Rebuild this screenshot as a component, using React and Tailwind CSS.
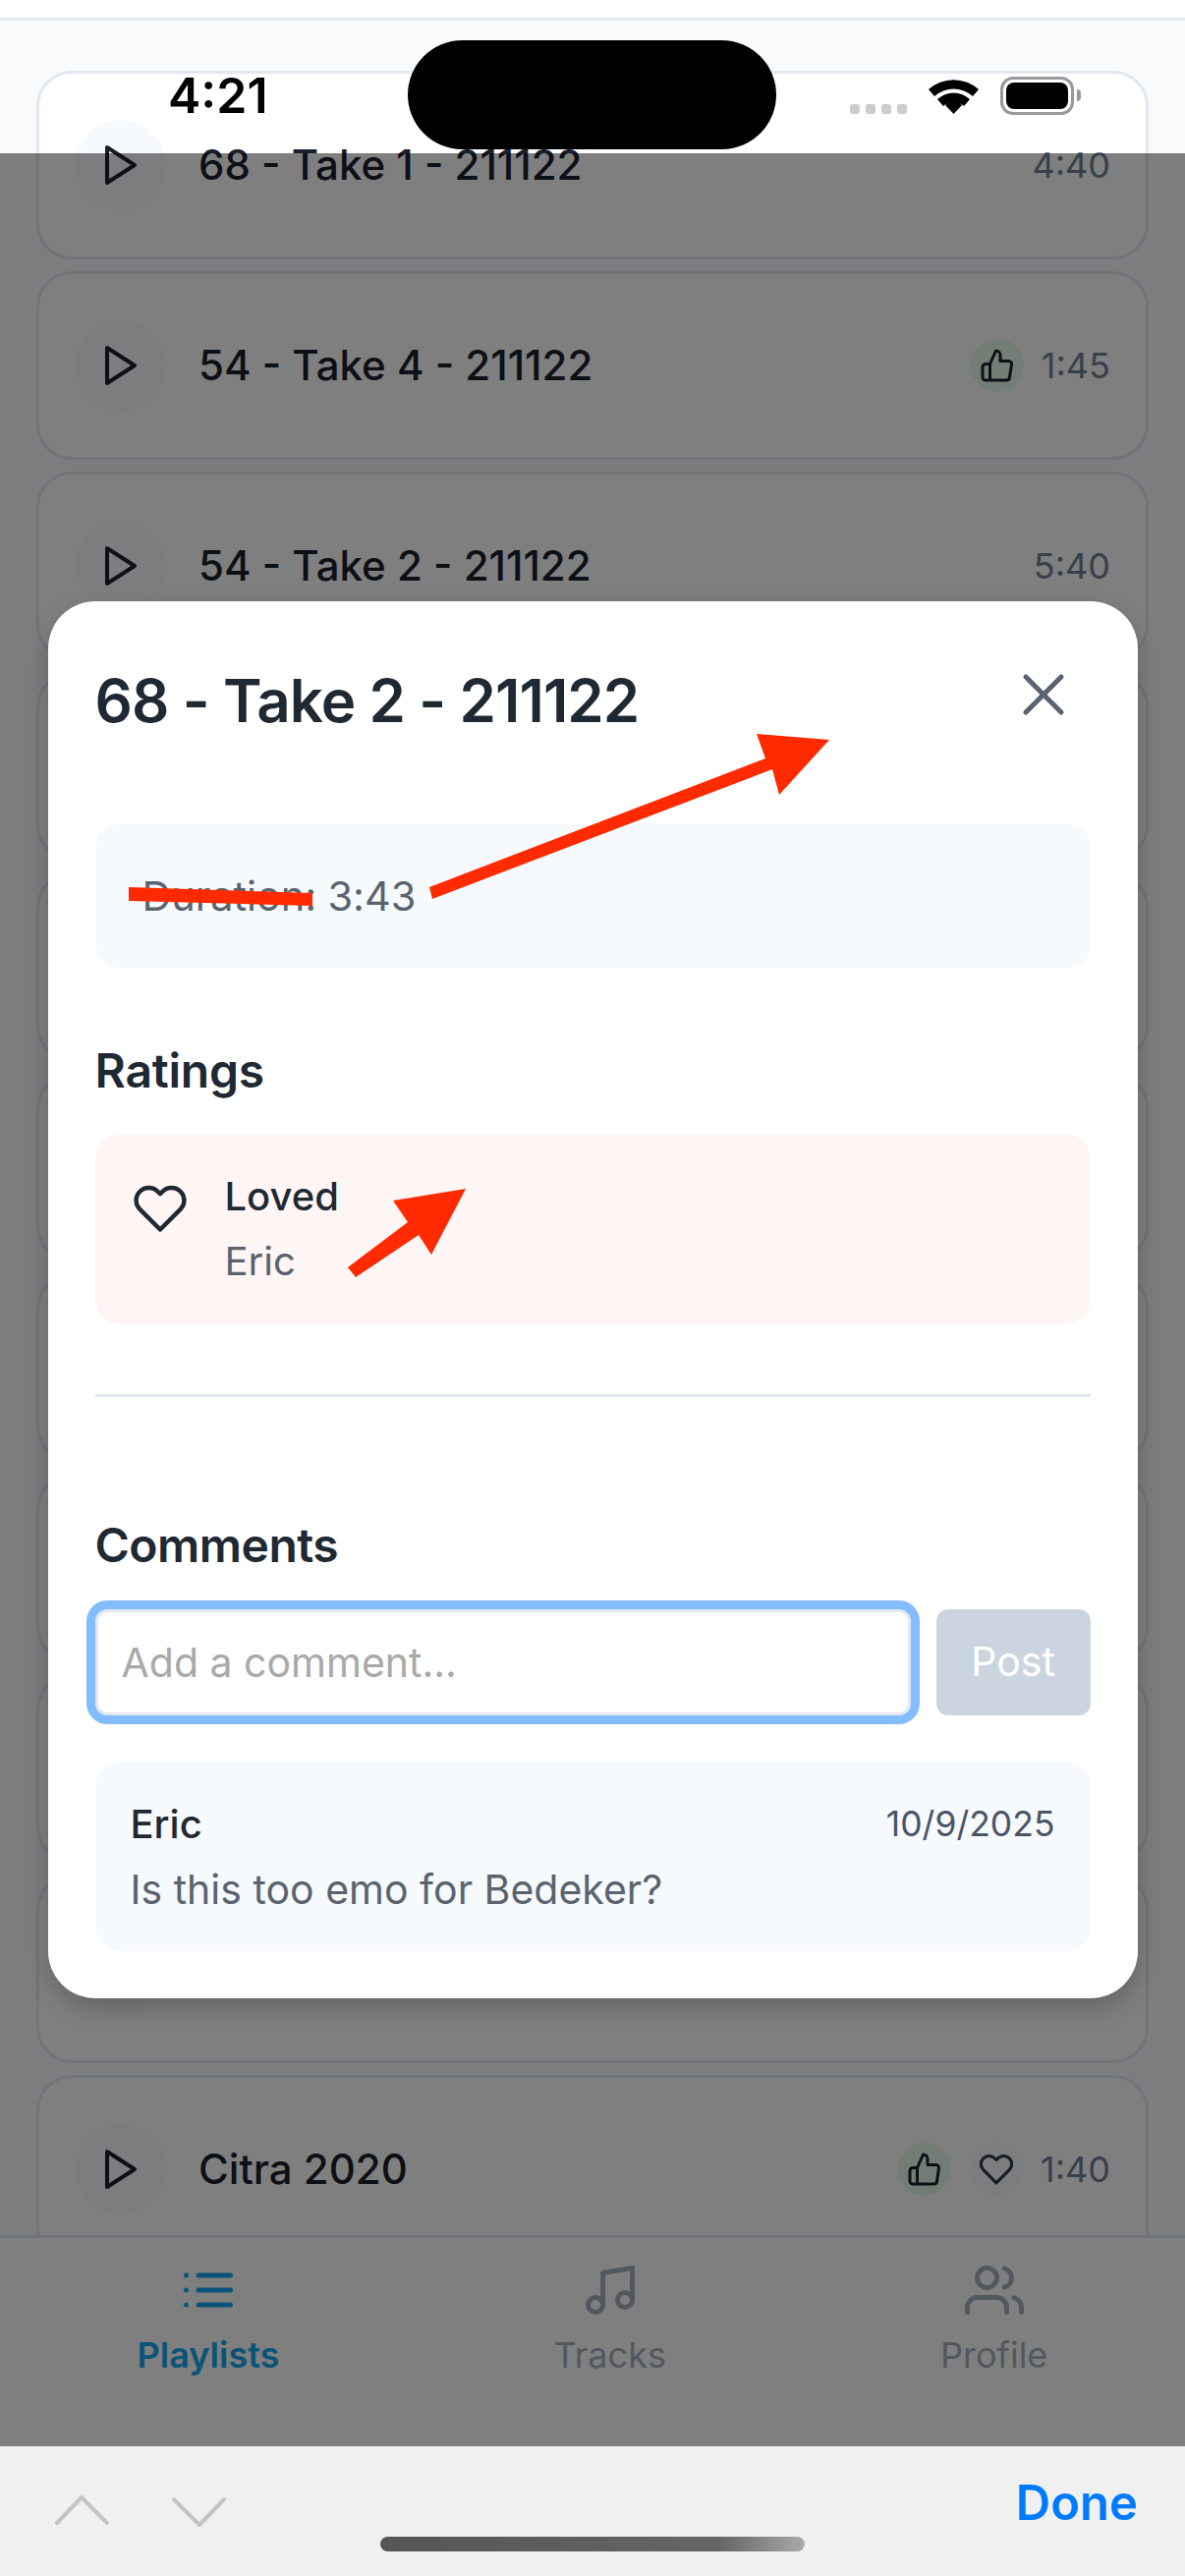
import React from 'react';

const ROWS = [
  { title: '68 - Take 1 - 211122', time: '4:40' },
  { title: '54 - Take 4 - 211122', time: '1:45', liked: true },
  { title: '54 - Take 2 - 211122', time: '5:40' },
  {}, {}, {}, {}, {}, {}, {},
  { title: 'Citra 2020', time: '1:40', liked: true, hearted: true },
];

function Icon({ size = 48, width = 2, className = '', children }) {
  return (
    <svg
      width={size}
      height={size}
      viewBox="0 0 24 24"
      fill="none"
      stroke="currentColor"
      strokeWidth={width}
      strokeLinecap="round"
      strokeLinejoin="round"
      className={className}
    >
      {children}
    </svg>
  );
}

const PlayIcon = () => (
  <Icon><polygon points="5 3 19 12 5 21 5 3" /></Icon>
);

const HeartIcon = ({ size = 36, width = 2, className = '' }) => (
  <Icon size={size} width={width} className={className}>
    <path d="M20.84 4.61a5.5 5.5 0 0 0-7.78 0L12 5.67l-1.06-1.06a5.5 5.5 0 0 0-7.78 7.78l1.06 1.06L12 21.23l7.78-7.78 1.06-1.06a5.5 5.5 0 0 0 0-7.78z" />
  </Icon>
);

const ThumbIcon = () => (
  <Icon size={36}>
    <path d="M14 9V5a3 3 0 0 0-3-3l-4 9v11h11.28a2 2 0 0 0 2-1.7l1.38-9a2 2 0 0 0-2-2.3zM7 22H4a2 2 0 0 1-2-2v-7a2 2 0 0 1 2-2h3" />
  </Icon>
);

function Row({ title, time, liked, hearted }) {
  return (
    <div className="flex h-[192px] shrink-0 items-center rounded-[36px] border-[3px] border-[#e2e8f0] bg-white px-[37px]">
      <div className="flex h-[92px] w-[92px] shrink-0 items-center justify-center rounded-full bg-[#f7fafc] text-[#1a202c]">
        <PlayIcon />
      </div>
      <div className="ml-[33px] flex-1 text-[42px] leading-[54px] font-medium text-[#1a202c]">{title}</div>
      {liked && (
        <div className="flex h-[54px] w-[54px] items-center justify-center rounded-full bg-[#c6f6d5]/50 text-[#1a202c]">
          <ThumbIcon />
        </div>
      )}
      {hearted && (
        <div className="ml-[19px] flex h-[54px] w-[54px] items-center justify-center rounded-full bg-[#f7fafc] text-[#2d3748]">
          <HeartIcon />
        </div>
      )}
      <div className="mr-[-1px] ml-[18px] text-[36px] leading-[48px] text-[#718096]">{time}</div>
    </div>
  );
}

function Tab({ label, active, children }) {
  return (
    <div className={`flex flex-col items-center ${active ? 'text-[#14a8ee]' : 'text-[#a6b0bd]'}`}>
      {children}
      <div className={`mt-[12px] text-[36px] leading-[48px] ${active ? 'font-semibold' : 'font-normal'}`}>{label}</div>
    </div>
  );
}

function StatusBar() {
  return (
    <div className="absolute inset-x-0 top-0 h-[156px]">
      <div className="absolute top-[69px] left-[171px] text-[50px] leading-[56px] font-semibold text-black">4:21</div>
      <div className="absolute top-[41px] left-[415px] h-[111px] w-[375px] rounded-full bg-black" />
      <div className="absolute top-[106px] left-[865px] flex gap-[6px]">
        <span className="h-[10px] w-[10px] rounded-[3px] bg-[#cccccc]" />
        <span className="h-[10px] w-[10px] rounded-[3px] bg-[#cccccc]" />
        <span className="h-[10px] w-[10px] rounded-[3px] bg-[#cccccc]" />
        <span className="h-[10px] w-[10px] rounded-[3px] bg-[#cccccc]" />
      </div>
      <svg width="51" height="37" viewBox="0 0 51 37" className="absolute top-[79px] left-[945px]">
        <path d="M0 12 A38 38 0 0 1 51 12 L45 19 A29 29 0 0 0 6 19 Z" fill="#000" />
        <path d="M9 22 A24 24 0 0 1 42 22 L36 29 A15 15 0 0 0 15 29 Z" fill="#000" />
        <path d="M17 28 A11 11 0 0 1 34 28 L25.5 37 Z" fill="#000" />
      </svg>
      <div className="absolute top-[78px] left-[1018px] h-[39px] w-[75px] rounded-[13px] border-[3px] border-[#999999] p-[3px]">
        <div className="h-full w-full rounded-[8px] bg-black" />
      </div>
      <div className="absolute top-[91px] left-[1096px] h-[12px] w-[4px] rounded-r-full bg-[#999999]" />
    </div>
  );
}

function Modal() {
  return (
    <div className="w-[1109px] rounded-[48px] bg-white p-[48px] shadow-[0_10px_24px_rgba(0,0,0,0.2)]">
      <div className="flex h-[130px] items-start justify-between">
        <div className="mt-[17px] text-[60px] leading-[72px] font-semibold tracking-[-0.9px] text-[#1f2933]">68 - Take 2 - 211122</div>
        <div className="mt-[11px] mr-[12px] text-[#5a6470]">
          <Icon size={72} width={1.7}>
            <line x1="18" y1="6" x2="6" y2="18" />
            <line x1="6" y1="6" x2="18" y2="18" />
          </Icon>
        </div>
      </div>
      <div className="mt-[48px] flex h-[148px] items-center rounded-[24px] bg-[#f7fafc] px-[48px] text-[41.5px] tracking-[-0.1px] text-[#5a6470]">Duration: 3:43</div>

      <div className="mt-[80px] mb-[41px] text-[48px] leading-[48px] font-semibold tracking-[-0.2px] text-[#1f2933]">Ratings</div>
      <div className="flex rounded-[24px] bg-[#fff5f5] p-[36px]">
        <HeartIcon size={56} width={1.9} className="mt-[11px] ml-[2px] shrink-0 text-[#1f2933]" />
        <div className="ml-[38px]">
          <div className="text-[40px] leading-[54px] font-medium text-[#1f2933]">Loved</div>
          <div className="mt-[12px] text-[40px] leading-[54px] text-[#5a6470]">Eric</div>
        </div>
      </div>
      <div className="mt-[72px] h-[3px] bg-[#e2e8f0]" />

      <div className="mt-[127px] mb-[41px] text-[48px] leading-[48px] font-semibold tracking-[-0.5px] text-[#1f2933]">Comments</div>
      <div className="flex gap-[26px]">
        <input
          placeholder="Add a comment..."
          className="h-[108px] min-w-0 flex-1 rounded-[12px] border-[3px] border-[#e2e8f0] bg-white px-[24px] text-[41px] ring-[9px] ring-[#84bdff] outline-none placeholder:text-[#a9a9a9]"
        />
        <button className="h-[108px] w-[157px] rounded-[12px] bg-[#cbd5e0] text-[41px] text-white">Post</button>
      </div>
      <div className="mt-[48px] rounded-[24px] bg-[#f7fafc] p-[36px]">
        <div className="flex items-center justify-between">
          <div className="text-[40px] leading-[54px] font-medium text-[#1f2933]">Eric</div>
          <div className="text-[35.5px] leading-[54px] text-[#4a5568]">10/9/2025</div>
        </div>
        <div className="mt-[12px] text-[41px] leading-[54px] text-[#5a6470]">Is this too emo for Bedeker?</div>
      </div>
    </div>
  );
}

function Annotations() {
  return (
    <svg width="1206" height="2622" viewBox="0 0 1206 2622" className="pointer-events-none absolute top-0 left-0" fill="#ff2a00">
      <polygon points="131,903 318,909 318,922 131,917" />
      <polygon points="437,903 779,772 770,747 844,753 793,809 786,783 440,915" />
      <polygon points="354,1290 415,1244 400,1222 474,1210 439,1277 426,1257 362,1300" />
    </svg>
  );
}

export default function App() {
  return (
    <div className="relative flex h-[2622px] w-[1206px] flex-col overflow-hidden bg-[#f8fafc] font-[Inter,sans-serif]">
      <div className="h-[21px] shrink-0 border-b-[3px] border-[#e2e8f0] bg-white" />
      <div className="flex min-h-0 flex-1 flex-col gap-[12px] overflow-hidden px-[37px] pt-[51px]">
        {ROWS.map((row, i) => (
          <Row key={i} {...row} />
        ))}
      </div>
      <div className="flex h-[215px] shrink-0 justify-around border-t-[3px] border-[#e2e8f0] bg-white pt-[23px]">
        <Tab label="Playlists" active>
          <Icon size={60}>
            <line x1="8" y1="6" x2="21" y2="6" />
            <line x1="8" y1="12" x2="21" y2="12" />
            <line x1="8" y1="18" x2="21" y2="18" />
            <line x1="3" y1="6" x2="3.01" y2="6" />
            <line x1="3" y1="12" x2="3.01" y2="12" />
            <line x1="3" y1="18" x2="3.01" y2="18" />
          </Icon>
        </Tab>
        <Tab label="Tracks">
          <Icon size={60}>
            <path d="M9 18V5l12-2v13" />
            <circle cx="6" cy="18" r="3" />
            <circle cx="18" cy="16" r="3" />
          </Icon>
        </Tab>
        <Tab label="Profile">
          <Icon size={60}>
            <path d="M17 21v-2a4 4 0 0 0-4-4H5a4 4 0 0 0-4 4v2" />
            <circle cx="9" cy="7" r="4" />
            <path d="M23 21v-2a4 4 0 0 0-3-3.87" />
            <path d="M16 3.13a4 4 0 0 1 0 7.75" />
          </Icon>
        </Tab>
      </div>
      <div className="relative h-[132px] shrink-0 bg-[#f0f0f0]">
        <svg width="200" height="60" viewBox="0 0 200 60" fill="none" stroke="#c4c4c4" strokeWidth="4" strokeLinecap="round" strokeLinejoin="round" className="absolute top-[40px] left-[50px]">
          <polyline points="8,38 33,12 59,38" />
          <polyline points="127,14 153,40 178,14" />
        </svg>
        <div className="absolute top-[26px] right-[48px] text-[49px] leading-[64px] font-semibold text-[#007aff]">Done</div>
        <div className="absolute top-[92px] left-[387px] h-[15px] w-[432px] rounded-full bg-gradient-to-r from-[#555555] via-[#666666] via-80% to-[#aaaaaa]" />
      </div>

      <div className="absolute inset-x-0 top-[156px] bottom-[132px] flex items-center justify-center bg-black/50">
        <Modal />
      </div>
      <StatusBar />
      <Annotations />
    </div>
  );
}
